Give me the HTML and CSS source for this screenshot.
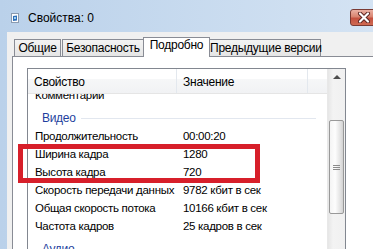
FILE: index.html
```html
<!DOCTYPE html>
<html lang="ru">
<head>
    <meta charset="UTF-8">
    <meta name="viewport" content="width=device-width, initial-scale=1.0">
    <title>Свойства: 0</title>

    <link rel="stylesheet" href="styles.css">
</head>
<body>
    <div class="window">
        <div class="titlebar">
            <svg class="app-icon" width="8" height="10" viewBox="0 0 8 10">
                <rect x="0.5" y="0.5" width="7" height="9" fill="#fdfdfd" stroke="#8a9bb0"/>
                <path d="M2 3 L6 2.5 L6 7.5 L2 8 Z" fill="#2f6fb8"/>
                <rect x="3" y="4" width="2" height="2" fill="#9fd0f2"/>
            </svg>
            <span class="title">Свойства: 0</span>
            <div class="close-btn">
                <svg width="14" height="11" viewBox="0 0 14 11">
                    <path d="M3 1.5 L11 9.5 M11 1.5 L3 9.5" stroke="#5a2320" stroke-width="4" stroke-linecap="round"/>
                    <path d="M3 1.5 L11 9.5 M11 1.5 L3 9.5" stroke="#ffffff" stroke-width="2.2" stroke-linecap="round"/>
                </svg>
            </div>
        </div>
        <div class="frame">
            <div class="dialog">
                <div class="tabs">
                    <div class="tab tab-general">Общие</div>
                    <div class="tab tab-security">Безопасность</div>
                    <div class="tab tab-details active">Подробно</div>
                    <div class="tab tab-versions">Предыдущие версии</div>
                </div>
                <div class="panel">
                    <div class="listbox">
                        <div class="list-main">
                            <div class="list-header">
                                <div class="cell-name">Свойство</div>
                                <div class="cell-value">Значение</div>
                                <div class="cell-rest"></div>
                            </div>
                            <div class="list-body">
                                <div class="rows">
                                    <div class="row"><span class="cell-name">Комментарии</span><span class="cell-value"></span></div>
                                    <div class="group">Видео</div>
                                    <div class="row"><span class="cell-name">Продолжительность</span><span class="cell-value">00:00:20</span></div>
                                    <div class="row"><span class="cell-name">Ширина кадра</span><span class="cell-value">1280</span></div>
                                    <div class="row"><span class="cell-name">Высота кадра</span><span class="cell-value">720</span></div>
                                    <div class="row"><span class="cell-name">Скорость передачи данных</span><span class="cell-value">9782 кбит в сек</span></div>
                                    <div class="row"><span class="cell-name">Общая скорость потока</span><span class="cell-value">10166 кбит в сек</span></div>
                                    <div class="row"><span class="cell-name">Частота кадров</span><span class="cell-value">25 кадров в сек</span></div>
                                    <div class="group">Аудио</div>
                                </div>
                            </div>
                        </div>
                        <div class="scrollbar">
                            <div class="arrow-up"></div>
                            <div class="thumb">
                                <div class="grip"></div>
                            </div>
                        </div>
                    </div>
                    <div class="highlight"></div>
                </div>
            </div>
        </div>
    </div>
</body>
</html>
```

FILE: styles.css
```css
body{
    margin: 0;
    width: 373px;
    height: 249px;
    overflow: hidden;
    font-family: "Liberation Sans", Arial, sans-serif;
    font-size: 12px;
    letter-spacing: -0.25px;
    color: #000;
}
.window{
    display: flex;
    flex-direction: column;
    height: 100%;
    background: linear-gradient(to right, #bad1ea, #d4e3f3);
}
.titlebar{
    display: flex;
    flex-shrink: 0;
    align-items: center;
    height: 32px;
    padding-top: 3px;
    box-sizing: border-box;
}
.app-icon{
    margin-left: 11px;
}
.title{
    margin-left: 9px;
    font-size: 12px;
    letter-spacing: 0;
}
.close-btn{
    margin-left: auto;
    margin-right: -8px;
    width: 31px;
    height: 17px;
    box-sizing: border-box;
    border: 1px solid #7a3a33;
    border-radius: 3px;
    background: linear-gradient(#ebb1a4 0%, #d8836f 45%, #c4503f 55%, #cf6a52 100%);
    display: flex;
    align-items: center;
    padding-left: 6px;
}
.frame{
    flex: 1;
    display: flex;
    min-height: 0;
}
.dialog{
    flex: 1;
    margin-left: 7px;
    background-color: #f0f0f0;
    padding: 5px 0 0 5px;
    display: flex;
    flex-direction: column;
    overflow: hidden;
}
.tabs{
    display: flex;
    flex-shrink: 0;
    align-items: flex-end;
    height: 19px;
    padding-left: 2px;
    gap: 1px;
}
.tab{
    flex-shrink: 0;
    height: 17px;
    box-sizing: border-box;
    border: 1px solid #898c95;
    border-bottom: none;
    background: linear-gradient(#f3f3f3, #e5e5e5);
    line-height: 16px;
    text-align: center;
    white-space: nowrap;
}
.tab-general{ width: 47px; }
.tab-security{ width: 82px; }
.tab-details{ width: 67px; }
.tab-versions{ width: 112px; }
.tab.active{
    position: relative;
    z-index: 1;
    height: 20px;
    margin: 0 -2px -1px -2px;
    background: #fff;
    line-height: 14px;
}
.panel{
    position: relative;
    flex: 1;
    background-color: #fff;
    border-top: 1px solid #898c95;
    border-left: 1px solid #898c95;
    padding: 11px 0 0 14px;
}
.listbox{
    display: flex;
    width: 319px;
    height: 200px;
    box-sizing: border-box;
    border: 1px solid #828790;
}
.list-main{
    flex: 1;
    display: flex;
    flex-direction: column;
    overflow: hidden;
}
.list-header{
    display: flex;
    flex-shrink: 0;
    height: 25px;
    box-sizing: border-box;
    border-bottom: 1px solid #e5e5e5;
    background: linear-gradient(#ffffff 0%, #ffffff 40%, #f6f7f8 41%, #f1f2f4 100%);
}
.list-header div{
    padding-top: 4px;
    line-height: 19px;
    box-sizing: border-box;
}
.list-header .cell-name,
.list-header .cell-value{
    border-right: 1px solid #e3e8ee;
}
.cell-name{
    flex-shrink: 0;
    width: 149px;
    padding-left: 6px;
    box-sizing: border-box;
    white-space: nowrap;
}
.cell-value{
    flex-shrink: 0;
    width: 131px;
    padding-left: 6px;
    box-sizing: border-box;
    white-space: nowrap;
}
.cell-rest{
    flex: 1;
}
.list-body{
    flex: 1;
    overflow: hidden;
}
.rows{
    margin-top: -8px;
    font-size: 11.5px;
    letter-spacing: -0.3px;
}
.row{
    display: flex;
    height: 18px;
    line-height: 18px;
}
.row .cell-name{
    padding-left: 7px;
}
.group{
    display: flex;
    align-items: center;
    height: 18px;
    margin-top: 5px;
    padding-left: 14px;
    margin-right: 11px;
    color: #1e3f9e;
    font-size: 12px;
}
.group::after{
    content: "";
    flex: 1;
    height: 1px;
    margin-left: 5px;
    background-color: #e2e7ef;
}
.scrollbar{
    flex-shrink: 0;
    width: 17px;
    display: flex;
    flex-direction: column;
    align-items: center;
    background: linear-gradient(to right, #e6e6e6, #f3f3f3 30%, #f0f0f0);
    border-left: 1px solid #e8e8e8;
}
.arrow-up{
    flex-shrink: 0;
    height: 17px;
    width: 100%;
    display: flex;
    justify-content: center;
    align-items: center;
}
.arrow-up::before{
    content: "";
    width: 0;
    height: 0;
    border-left: 4px solid transparent;
    border-right: 4px solid transparent;
    border-bottom: 4px solid #4d4d4d;
    margin-top: -2px;
}
.thumb{
    flex-shrink: 0;
    margin-top: 34px;
    width: 15px;
    height: 94px;
    box-sizing: border-box;
    border: 1px solid #999;
    border-radius: 2px;
    background: linear-gradient(to right, #f4f4f4, #fdfdfd 40%, #e2e2e2 80%, #d2d2d2);
    display: flex;
    justify-content: center;
    align-items: center;
}
.grip{
    width: 7px;
    height: 5px;
    border-top: 1px solid #8c8c8c;
    border-bottom: 1px solid #8c8c8c;
    box-sizing: border-box;
    background: linear-gradient(transparent 1px, #8c8c8c 1px, #8c8c8c 2px, transparent 2px);
}
.highlight{
    position: absolute;
    left: 5px;
    top: 87px;
    width: 242px;
    height: 39px;
    box-sizing: border-box;
    border: 5px solid #d71f2a;
}
```
